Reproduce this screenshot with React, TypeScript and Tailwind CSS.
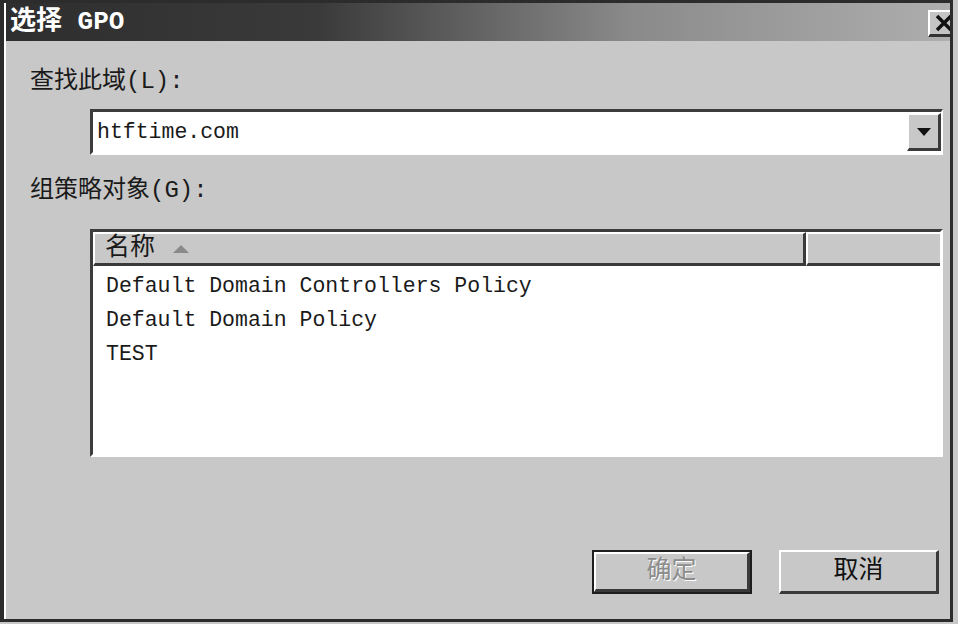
import React from "react";

const cjk = { fontFamily: '"Liberation Mono", "Noto Sans CJK SC", monospace' };

const rows = ["Default Domain Controllers Policy", "Default Domain Policy", "TEST"];

function Btn({ label, primary }: { label: string; primary?: boolean }) {
  const inner = (
    <div className="flex h-full w-full items-center justify-center border-t-2 border-l-2 border-b-[3px] border-r-[3px] border-t-white border-l-white border-b-[#3a3a3a] border-r-[#3a3a3a] bg-[#c8c8c8]">
      <span
        className={`text-[25px] leading-none ${primary ? "text-[#8c8c8c] [text-shadow:1px_1px_0_#ffffff]" : "text-[#111]"}`}
        style={cjk}
      >
        {label}
      </span>
    </div>
  );
  return (
    <div className={`h-[44px] w-[160px] ${primary ? "border-2 border-[#1e1e1e]" : ""}`}>{inner}</div>
  );
}

export default function App() {
  return (
    <div className="flex h-[624px] w-[958px] bg-[#c8c8c8]">
      <div className="flex h-[622px] w-[953px] flex-col overflow-hidden border-t-[3px] border-l-[4px] border-r-[3px] border-b-[3px] border-[#2c2c2c]">
        <div className="flex h-full flex-col border-l-2 border-white">
          {/* title bar */}
          <div className="relative flex h-[38px] shrink-0 items-center overflow-hidden bg-[linear-gradient(to_right,#2e2e2e_0%,#3a3a3a_33%,#8a8a8a_66%,#aeaeae_100%)] pl-[4px]">
            <span className="text-[26px] font-bold leading-none text-white" style={cjk}>
              选择 GPO
            </span>
            <div className="absolute right-[-8px] top-[7px] flex h-[27px] w-[30px] items-center justify-center border-t-2 border-l-2 border-b-[3px] border-t-white border-l-white border-b-[#333] bg-[#c4c4c4]">
              <svg width="18" height="18" viewBox="0 0 18 18">
                <path d="M2 2 L16 16 M16 2 L2 16" stroke="#111" strokeWidth="3.5" />
              </svg>
            </div>
          </div>

          {/* body */}
          <div className="flex flex-1 flex-col pl-[24px] pr-[7px] text-[#1a1a1a]">
            <div className="mt-[26px] h-[30px] text-[24px] leading-[30px]" style={cjk}>
              查找此域(L):
            </div>

            <div className="ml-[60px] mt-[12px] flex h-[46px] border-t-[3px] border-l-[3px] border-b-[3px] border-r-2 border-t-[#3c3c3c] border-l-[#3c3c3c] border-b-white border-r-white bg-white">
              <div className="flex flex-1 items-center pl-[4px] text-[21.5px]" style={cjk}>
                htftime.com
              </div>
              <div className="my-[1px] mr-[0px] flex w-[34px] items-center justify-center border-t-2 border-l-2 border-b-[3px] border-r-[3px] border-t-white border-l-white border-b-[#3a3a3a] border-r-[#3a3a3a] bg-[#c8c8c8]">
                <svg width="14" height="8" viewBox="0 0 14 8">
                  <path d="M0 0 H14 L7 8 Z" fill="#111" />
                </svg>
              </div>
            </div>

            <div className="mt-[21px] h-[30px] text-[24px] leading-[30px]" style={cjk}>
              组策略对象(G):
            </div>

            <div className="ml-[60px] mt-[23px] flex h-[228px] flex-col border-t-[3px] border-l-[3px] border-b-[3px] border-r-[3px] border-t-[#3c3c3c] border-l-[#3c3c3c] border-b-white border-r-white bg-white">
              <div className="flex h-[34px] shrink-0 bg-[#c8c8c8]">
                <div className="flex w-[713px] items-center gap-[18px] border-t-2 border-l-2 border-b-[3px] border-r-[3px] border-t-white border-l-white border-b-[#3a3a3a] border-r-[#3a3a3a] pl-[10px]">
                  <span className="text-[25px] leading-none" style={cjk}>
                    名称
                  </span>
                  <svg width="16" height="8" viewBox="0 0 16 8">
                    <path d="M0 8 H16 L8 0 Z" fill="#8a8a8a" />
                  </svg>
                </div>
                <div className="flex-1 border-t-2 border-l-2 border-b-[3px] border-t-white border-l-white border-b-[#3a3a3a]" />
              </div>
              <div className="flex flex-col pt-[3px]">
                {rows.map((r) => (
                  <div key={r} className="flex h-[34px] items-center pl-[13px] text-[21.5px]" style={cjk}>
                    {r}
                  </div>
                ))}
              </div>
            </div>

            <div className="mt-[93px] flex justify-end gap-[27px] pr-[4px]">
              <Btn label="确定" primary />
              <Btn label="取消" />
            </div>
          </div>
        </div>
      </div>
    </div>
  );
}
